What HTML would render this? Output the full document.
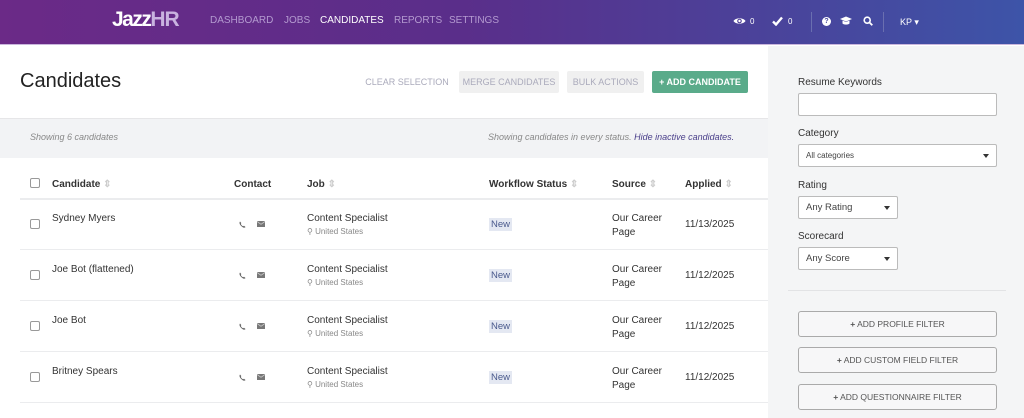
<!DOCTYPE html>
<html><head><meta charset="utf-8"><style>
*{box-sizing:border-box;margin:0;padding:0}
body{width:1024px;height:418px;overflow:hidden;font-family:"Liberation Sans",sans-serif;background:#fff;position:relative;color:#333}
.hdr{position:absolute;left:0;top:0;width:1024px;height:45px;background:linear-gradient(90deg,#6b2a87 0%,#5a2e8a 45%,#3d54a8 100%);border-bottom:1px solid #c9b6dc}
.nv{position:absolute;top:15px;font-size:10px;color:#b49ad0;letter-spacing:0;white-space:nowrap}
.a{position:absolute}
.main{position:absolute;left:0;top:46px;width:768px;height:372px;background:#fff}
.side{position:absolute;left:768px;top:46px;width:256px;height:372px;background:#f4f5f6}
.btn{position:absolute;top:71px;height:22px;font-size:9px;line-height:22px;text-align:center;border-radius:2px;color:#aab}
.th{position:absolute;top:179px;font-size:10px;font-weight:bold;color:#333}
.cb{position:absolute;left:30px;width:10px;height:10px;border:1px solid #999;border-radius:2px;background:#fff}
.rl{position:absolute;left:20px;width:748px;height:1px;background:#ebecee}
.t{position:absolute;font-size:10px;color:#333}
.s{position:absolute;font-size:8px;color:#888}
.ic{position:absolute}
.new{position:absolute;left:489px;font-size:9.5px;color:#4a5a8c;background:#e4e8f2;padding:1px 2px}
.lab{position:absolute;left:798px;font-size:10px;color:#333}
.sel{position:absolute;background:#fff;border:1px solid #bbb;border-radius:2px;font-size:9.5px;color:#444;padding-left:7px}
.fb{position:absolute;left:798px;width:199px;height:26px;border:1px solid #aaa;border-radius:3px;font-size:8.5px;color:#555;text-align:center;line-height:24px;background:#f7f7f8}
.car{position:absolute;right:7px;top:9px;width:0;height:0;border-left:3px solid transparent;border-right:3px solid transparent;border-top:4px solid #333}
</style></head><body>
<div class="hdr">
<div class="a" style="left:112px;top:8px;font-size:21px;font-weight:bold;color:#fff;letter-spacing:-1.5px;white-space:nowrap">Jazz<b style="color:#c9b3e0;letter-spacing:-1px">HR</b></div>
<div class="nv" style="left:210px">DASHBOARD</div>
<div class="nv" style="left:284px">JOBS</div>
<div class="nv" style="left:320px;color:#fff">CANDIDATES</div>
<div class="nv" style="left:394px">REPORTS</div>
<div class="nv" style="left:449px">SETTINGS</div>
<svg class="ic" style="left:733px;top:16px" width="13" height="10" viewBox="0 0 13 10"><path d="M0.5 5C2.5 1.5 10.5 1.5 12.5 5C10.5 8.5 2.5 8.5 0.5 5Z" fill="#fff"/><circle cx="6.5" cy="5" r="2.3" fill="#4f3f98"/><circle cx="6.5" cy="5" r="1.2" fill="#fff"/></svg>
<div class="nv" style="left:750px;color:#fff;font-size:8px;top:17px">0</div>
<svg class="ic" style="left:772px;top:16px" width="11" height="10" viewBox="0 0 11 10"><path d="M1 5.5L4 8.5L10 1.5" stroke="#fff" stroke-width="2.4" fill="none"/></svg>
<div class="nv" style="left:788px;color:#fff;font-size:8px;top:17px">0</div>
<div class="a" style="left:811px;top:12px;width:1px;height:20px;background:#6a6fb0"></div>
<div class="a" style="left:822px;top:17px;width:9px;height:9px;border-radius:50%;background:#fff;color:#4a4aa0;font-size:7px;line-height:9px;text-align:center;font-weight:bold">?</div>
<svg class="ic" style="left:840px;top:16px" width="12" height="10" viewBox="0 0 12 10"><path d="M0 3L6 0.5L12 3L6 5.5Z" fill="#fff"/><path d="M2.5 4.5V7.5C4 9 8 9 9.5 7.5V4.5L6 6Z" fill="#fff"/></svg>
<svg class="ic" style="left:863px;top:16px" width="10" height="10" viewBox="0 0 10 10"><circle cx="4.2" cy="4.2" r="3" stroke="#fff" stroke-width="1.6" fill="none"/><path d="M6.5 6.5L9.3 9.3" stroke="#fff" stroke-width="1.8"/></svg>
<div class="a" style="left:883px;top:12px;width:1px;height:20px;background:#6a6fb0"></div>
<div class="nv" style="left:900px;color:#fff;font-size:9px;top:17px">KP ▾</div>
</div>
<div class="main">
<div class="a" style="left:20px;top:24px;font-size:20px;color:#222">Candidates</div>
<div class="a" style="left:0;top:72px;width:768px;height:40px;background:#f2f3f5;border-top:1px solid #e6e6e8"></div>
<div class="a" style="left:30px;top:86px;font-size:9px;font-style:italic;color:#888">Showing 6 candidates</div>
<div class="a" style="left:488px;top:86px;font-size:9px;font-style:italic;color:#888">Showing candidates in every status. <span style="color:#4a3f8a">Hide inactive candidates.</span></div>
</div>
<div class="btn" style="left:364px;width:86px">CLEAR SELECTION</div>
<div class="btn" style="left:459px;width:100px;background:#f0f0f0">MERGE CANDIDATES</div>
<div class="btn" style="left:567px;width:77px;background:#f0f0f0">BULK ACTIONS</div>
<div class="btn" style="left:652px;width:96px;background:#5aab8a;color:#fff;font-weight:bold">+ ADD CANDIDATE</div>
<div class="side"></div>
<div class="cb" style="top:178px"></div>
<div class="th" style="left:52px">Candidate <span style="color:#ccc">⇕</span></div>
<div class="th" style="left:234px">Contact</div>
<div class="th" style="left:307px">Job <span style="color:#ccc">⇕</span></div>
<div class="th" style="left:489px">Workflow Status <span style="color:#ccc">⇕</span></div>
<div class="th" style="left:612px">Source <span style="color:#ccc">⇕</span></div>
<div class="th" style="left:685px">Applied <span style="color:#ccc">⇕</span></div>
<div class="rl" style="top:198px;height:2px"></div>

<div class="cb" style="top:219px"></div><div class="t" style="left:52px;top:213px">Sydney Myers</div>
<svg class="ic" style="left:239px;top:221px" width="7" height="7" viewBox="0 0 7 7"><path d="M1 0.5L2.3 2L1.8 3C2.5 4.3 3.2 5 4.2 5.3L5 4.8L6.5 6C5.8 7 4.5 7 3 5.8C1.5 4.5 0.3 3 0.5 1.5Z" fill="#666"/></svg>
<svg class="ic" style="left:257px;top:221px" width="8" height="6" viewBox="0 0 8 6"><rect width="8" height="6" fill="#777"/><path d="M0 0.5L4 3.3L8 0.5" stroke="#ccc" stroke-width=".8" fill="none"/></svg>
<div class="t" style="left:307px;top:213px">Content Specialist</div><div class="s" style="left:307px;top:227px">⚲ United States</div>
<div class="new" style="top:218px">New</div>
<div class="t" style="left:612px;top:212px;line-height:14px">Our Career<br>Page</div><div class="t" style="left:685px;top:219px">11/13/2025</div>
<div class="rl" style="top:249px"></div>

<div class="cb" style="top:270px"></div><div class="t" style="left:52px;top:264px">Joe Bot (flattened)</div>
<svg class="ic" style="left:239px;top:272px" width="7" height="7" viewBox="0 0 7 7"><path d="M1 0.5L2.3 2L1.8 3C2.5 4.3 3.2 5 4.2 5.3L5 4.8L6.5 6C5.8 7 4.5 7 3 5.8C1.5 4.5 0.3 3 0.5 1.5Z" fill="#666"/></svg>
<svg class="ic" style="left:257px;top:272px" width="8" height="6" viewBox="0 0 8 6"><rect width="8" height="6" fill="#777"/><path d="M0 0.5L4 3.3L8 0.5" stroke="#ccc" stroke-width=".8" fill="none"/></svg>
<div class="t" style="left:307px;top:264px">Content Specialist</div><div class="s" style="left:307px;top:278px">⚲ United States</div>
<div class="new" style="top:269px">New</div>
<div class="t" style="left:612px;top:263px;line-height:14px">Our Career<br>Page</div><div class="t" style="left:685px;top:270px">11/12/2025</div>
<div class="rl" style="top:300px"></div>

<div class="cb" style="top:321px"></div><div class="t" style="left:52px;top:315px">Joe Bot</div>
<svg class="ic" style="left:239px;top:323px" width="7" height="7" viewBox="0 0 7 7"><path d="M1 0.5L2.3 2L1.8 3C2.5 4.3 3.2 5 4.2 5.3L5 4.8L6.5 6C5.8 7 4.5 7 3 5.8C1.5 4.5 0.3 3 0.5 1.5Z" fill="#666"/></svg>
<svg class="ic" style="left:257px;top:323px" width="8" height="6" viewBox="0 0 8 6"><rect width="8" height="6" fill="#777"/><path d="M0 0.5L4 3.3L8 0.5" stroke="#ccc" stroke-width=".8" fill="none"/></svg>
<div class="t" style="left:307px;top:315px">Content Specialist</div><div class="s" style="left:307px;top:329px">⚲ United States</div>
<div class="new" style="top:320px">New</div>
<div class="t" style="left:612px;top:314px;line-height:14px">Our Career<br>Page</div><div class="t" style="left:685px;top:321px">11/12/2025</div>
<div class="rl" style="top:351px"></div>

<div class="cb" style="top:372px"></div><div class="t" style="left:52px;top:366px">Britney Spears</div>
<svg class="ic" style="left:239px;top:374px" width="7" height="7" viewBox="0 0 7 7"><path d="M1 0.5L2.3 2L1.8 3C2.5 4.3 3.2 5 4.2 5.3L5 4.8L6.5 6C5.8 7 4.5 7 3 5.8C1.5 4.5 0.3 3 0.5 1.5Z" fill="#666"/></svg>
<svg class="ic" style="left:257px;top:374px" width="8" height="6" viewBox="0 0 8 6"><rect width="8" height="6" fill="#777"/><path d="M0 0.5L4 3.3L8 0.5" stroke="#ccc" stroke-width=".8" fill="none"/></svg>
<div class="t" style="left:307px;top:366px">Content Specialist</div><div class="s" style="left:307px;top:380px">⚲ United States</div>
<div class="new" style="top:371px">New</div>
<div class="t" style="left:612px;top:365px;line-height:14px">Our Career<br>Page</div><div class="t" style="left:685px;top:372px">11/12/2025</div>
<div class="rl" style="top:402px"></div>

<div class="lab" style="top:77px">Resume Keywords</div>
<div class="sel" style="left:798px;top:93px;width:199px;height:23px"></div>
<div class="lab" style="top:128px">Category</div>
<div class="sel" style="left:798px;top:144px;width:199px;height:23px;line-height:21px;font-size:8px">All categories<div class="car"></div></div>
<div class="lab" style="top:180px">Rating</div>
<div class="sel" style="left:798px;top:196px;width:100px;height:23px;line-height:21px">Any Rating<div class="car"></div></div>
<div class="lab" style="top:231px">Scorecard</div>
<div class="sel" style="left:798px;top:247px;width:100px;height:23px;line-height:21px">Any Score<div class="car"></div></div>
<div class="a" style="left:788px;top:290px;width:218px;height:1px;background:#e2e3e5"></div>
<div class="fb" style="top:311px"><b>+</b> ADD PROFILE FILTER</div>
<div class="fb" style="top:347px"><b>+</b> ADD CUSTOM FIELD FILTER</div>
<div class="fb" style="top:384px"><b>+</b> ADD QUESTIONNAIRE FILTER</div>
</body></html>
